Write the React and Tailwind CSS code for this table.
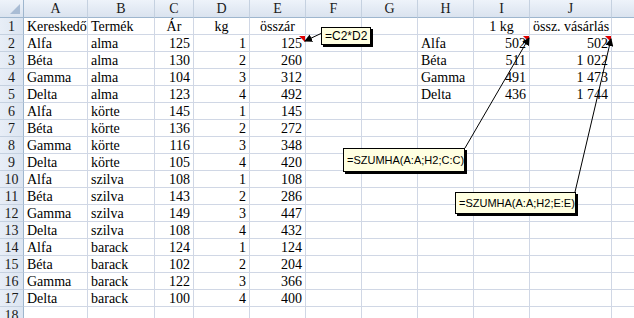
import React from 'react';

const cols = ['A', 'B', 'C', 'D', 'E', 'F', 'G', 'H', 'I', 'J', 'K'];

const data = [
  ['Alfa', 'alma', 125, 1],
  ['Béta', 'alma', 130, 2],
  ['Gamma', 'alma', 104, 3],
  ['Delta', 'alma', 123, 4],
  ['Alfa', 'körte', 145, 1],
  ['Béta', 'körte', 136, 2],
  ['Gamma', 'körte', 116, 3],
  ['Delta', 'körte', 105, 4],
  ['Alfa', 'szilva', 108, 1],
  ['Béta', 'szilva', 143, 2],
  ['Gamma', 'szilva', 149, 3],
  ['Delta', 'szilva', 108, 4],
  ['Alfa', 'barack', 124, 1],
  ['Béta', 'barack', 102, 2],
  ['Gamma', 'barack', 122, 3],
  ['Delta', 'barack', 100, 4],
];

const summary = [
  ['Alfa', '502', '502'],
  ['Béta', '511', '1 022'],
  ['Gamma', '491', '1 473'],
  ['Delta', '436', '1 744'],
];

function Cell({ children, right, center }) {
  return (
    <div
      className={`h-[17px] border-r border-b border-[#d0d7e5] px-[3px] leading-[17px] whitespace-nowrap overflow-visible ${
        right ? 'text-right' : center ? 'text-center' : 'text-left'
      }`}
    >
      {children}
    </div>
  );
}

function buildRow(r) {
  const cells = Array(11).fill(null);
  if (r === 1) {
    cells[0] = { t: 'Kereskedő' };
    cells[1] = { t: 'Termék' };
    cells[2] = { t: 'Ár', c: true };
    cells[3] = { t: 'kg', c: true };
    cells[4] = { t: 'összár', c: true };
    cells[8] = { t: '1 kg', c: true };
    cells[9] = { t: 'össz. vásárlás', c: true };
  } else if (r <= 17) {
    const d = data[r - 2];
    cells[0] = { t: d[0] };
    cells[1] = { t: d[1] };
    cells[2] = { t: d[2], r: true };
    cells[3] = { t: d[3], r: true };
    cells[4] = { t: d[2] * d[3], r: true };
    if (r <= 5) {
      const s = summary[r - 2];
      cells[7] = { t: s[0] };
      cells[8] = { t: s[1], r: true };
      cells[9] = { t: s[2], r: true };
    }
  }
  return cells;
}

function Comment({ text, className }) {
  return (
    <div
      className={`absolute bg-[#ffffe1] border border-black px-[3px] text-black shadow-[2px_2px_0_#000] whitespace-nowrap ${className}`}
      style={{ fontFamily: '"Liberation Sans", Arial, sans-serif' }}
    >
      {text}
    </div>
  );
}

export default function App() {
  const rows = Array.from({ length: 18 }, (_, i) => i + 1);
  return (
    <div
      className="relative w-[634px] h-[318px] overflow-hidden bg-white text-[14px] text-black"
      style={{ fontFamily: '"Liberation Serif", "Times New Roman", serif' }}
    >
      <div className="grid grid-cols-[24px_64px_67px_39px_56px_56px_56px_56px_56px_56px_82px_64px] grid-rows-[18px]">
        {/* select-all corner */}
        <div className="relative h-[18px] border-r border-b border-[#9eb6ce] bg-gradient-to-b from-[#eef3fa] to-[#dae3ef]">
          <div className="absolute right-[3px] bottom-[3px] w-0 h-0 border-l-[10px] border-l-transparent border-b-[10px] border-b-[#a9bcd4]" />
        </div>
        {cols.map((c) => (
          <div
            key={c}
            className="h-[18px] border-r border-b border-r-[#c5d1e0] border-b-[#9eb6ce] bg-gradient-to-b from-[#eef3fa] to-[#dae3ef] text-center leading-[18px] text-[#1b1b1b]"
          >
            {c}
          </div>
        ))}
        {rows.map((r) => (
          <React.Fragment key={r}>
            <div className="h-[17px] border-r border-b border-r-[#9eb6ce] border-b-[#c5d1e0] bg-gradient-to-r from-[#e8eef7] to-[#dce5f1] text-center leading-[17px] text-[#1b1b1b]">
              {r}
            </div>
            {buildRow(r).map((cell, i) => (
              <Cell key={i} right={cell && cell.r} center={cell && cell.c}>
                {cell ? cell.t : ''}
              </Cell>
            ))}
          </React.Fragment>
        ))}
      </div>

      {/* red comment indicators */}
      <div className="absolute left-[299px] top-[36px] w-0 h-0 border-l-[6px] border-l-transparent border-t-[6px] border-t-[#e00000]" />
      <div className="absolute left-[523px] top-[36px] w-0 h-0 border-l-[6px] border-l-transparent border-t-[6px] border-t-[#e00000]" />
      <div className="absolute left-[605px] top-[36px] w-0 h-0 border-l-[6px] border-l-transparent border-t-[6px] border-t-[#e00000]" />

      <svg className="absolute left-0 top-0" width="634" height="318">
        <defs>
          <marker id="ah" markerWidth="8" markerHeight="8" refX="7" refY="4" orient="auto" markerUnits="userSpaceOnUse">
            <path d="M0,0 L8,4 L0,8 Z" fill="#000" />
          </marker>
        </defs>
        <line x1="322" y1="33" x2="305" y2="41" stroke="#000" strokeWidth="1" markerEnd="url(#ah)" />
        <line x1="465" y1="148" x2="529" y2="38" stroke="#000" strokeWidth="1" markerEnd="url(#ah)" />
        <line x1="575" y1="192" x2="611" y2="39" stroke="#000" strokeWidth="1" markerEnd="url(#ah)" />
      </svg>

      <Comment text="=C2*D2" className="left-[321px] top-[27px] w-[50px] h-[18px] text-[12px] leading-[16px]" />
      <Comment text="=SZUMHA(A:A;H2;C:C)" className="left-[343px] top-[148px] w-[122px] h-[24px] text-[11px] leading-[22px]" />
      <Comment text="=SZUMHA(A:A;H2;E:E)" className="left-[455px] top-[192px] w-[121px] h-[22px] text-[11px] leading-[20px]" />
    </div>
  );
}
